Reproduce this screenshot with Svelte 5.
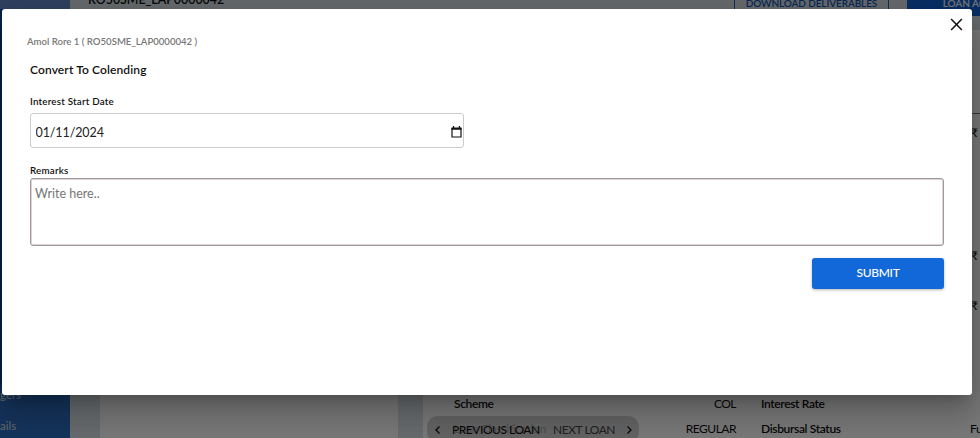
<script lang="ts">
	let startDate = $state('01/11/2024');
	let remarks = $state('');

	const customer = 'Amol Rore 1 ( RO50SME_LAP0000042 )';

	const amounts = ['first', 'second', 'third'];

	const details = [
		{ label: 'Scheme', value: 'COL', label2: 'Interest Rate', value2: '' },
		{ label: 'Loan Classification', value: 'REGULAR', label2: 'Disbursal Status', value2: 'Fully' }
	];
</script>

<div class="page">
	<nav class="sidebar">
		<div class="brand"></div>
		<span class="nav-item">gers</span>
		<span class="nav-item">ails</span>
	</nav>

	<main>
		<header>
			<span class="loan-id">RO50SME_LAP0000042</span>
			<button class="outlined">DOWNLOAD DELIVERABLES</button>
			<button class="filled">LOAN ACTIONS</button>
		</header>

		<div class="cards">
			<section class="card summary"></section>
			<section class="card loan">
				<div class="amounts">
					{#each amounts as amount (amount)}
						<span class="amount {amount}">₹</span>
					{/each}
				</div>
				{#each details as row (row.label)}
					<div class="row">
						<b>{row.label}</b>
						<span class="value">{row.value}</span>
						<b class="label2">{row.label2}</b>
						<span class="value2">{row.value2}</span>
					</div>
				{/each}
			</section>
		</div>
	</main>

	<div class="pager">
		<svg viewBox="0 0 8 10"><path d="M5.5 1.5 2 5l3.5 3.5" /></svg>
		<span class="prev">PREVIOUS LOAN</span>
		<span class="next">NEXT LOAN</span>
		<svg viewBox="0 0 8 10"><path d="M2.5 1.5 6 5 2.5 8.5" /></svg>
	</div>
</div>

<div class="backdrop">
	<div class="dialog" role="dialog" aria-modal="true">
		<button class="close" aria-label="Close">
			<svg viewBox="0 0 12 12"><path d="m1 1 10 10M11 1 1 11" /></svg>
		</button>
		<p class="customer">{customer}</p>
		<h2>Convert To Colending</h2>

		<label for="start-date">Interest Start Date</label>
		<div class="date-field">
			<input id="start-date" bind:value={startDate} />
			<svg viewBox="0 0 12 12">
				<path class="sheet" d="M1.5 2.5h9v8.5h-9z" />
				<path class="band" d="M1 1.4h10v2.4H1zM2.4 0h1.3v2H2.4zM8.3 0h1.3v2H8.3z" />
			</svg>
		</div>

		<label for="remarks" class="remarks-label">Remarks</label>
		<textarea id="remarks" placeholder="Write here.." bind:value={remarks}></textarea>

		<button class="submit">SUBMIT</button>
	</div>
</div>

<style>
	:global(body) {
		overflow: hidden;
		font-family: Lato, 'Noto Sans', sans-serif;
	}

	button {
		font-family: inherit;
		border: 0;
		cursor: pointer;
	}

	.page {
		position: relative;
		display: flex;
		height: 438px;
		overflow: hidden;
		color: #111;
		background: #dbe3ea;
	}

	.sidebar {
		box-sizing: border-box;
		flex: none;
		display: flex;
		flex-direction: column;
		width: 70px;
		color: #d5dbe5;
		background: linear-gradient(#0049a8 380px, #2e6fc2 395px);
	}

	.brand {
		flex: none;
		height: 9px;
		margin-bottom: 378px;
		background: #648dcd;
	}

	.nav-item {
		flex: none;
		height: 31px;
		font-size: 11.5px;
		line-height: 15px;
	}

	main {
		flex: 1;
		min-width: 0;
	}

	header {
		display: flex;
		align-items: flex-start;
		height: 30px;
		overflow: hidden;
	}

	.loan-id {
		flex: none;
		width: 646px;
		margin-left: 18px;
		margin-top: -8px;
		font-size: 12.4px;
		font-weight: 600;
		line-height: 15px;
	}

	header button {
		box-sizing: border-box;
		flex: none;
		height: 25px;
		margin-top: -9px;
		padding: 0;
		font-size: 10px;
		font-weight: 600;
		line-height: 23px;
		white-space: nowrap;
	}

	.outlined {
		width: 155px;
		letter-spacing: -0.1px;
		color: #1256b8;
		background: transparent;
		border: 1px solid #2462bb;
	}

	.filled {
		width: 144px;
		margin-left: 18px;
		color: #fff;
		background: #1565d8;
	}

	.cards {
		display: flex;
		gap: 25px;
		height: 408px;
		padding-left: 30px;
	}

	.card {
		box-sizing: border-box;
		flex: none;
		height: 420px;
		background: #fff;
	}

	.summary {
		width: 298px;
	}

	.loan {
		width: 600px;
		padding-left: 31px;
	}

	.amounts {
		display: flex;
		flex-direction: column;
		height: 366px;
		padding-left: 517px;
	}

	.amount {
		flex: none;
		font-size: 12px;
		line-height: 16px;
	}

	.first {
		box-sizing: border-box;
		height: 125px;
		margin-top: 83px;
		padding-top: 11px;
		border-top: 1px solid #777;
	}

	.second {
		height: 50px;
		margin-top: 10px;
	}

	.row {
		display: grid;
		grid-template-columns: 180px 102px 25px 209px 60px;
		height: 25px;
		font-size: 12px;
		letter-spacing: -0.35px;
		line-height: 16px;
	}

	.row b {
		font-weight: 600;
	}

	.value {
		text-align: right;
		letter-spacing: -0.5px;
	}

	.label2 {
		grid-column: 4;
	}

	.pager {
		position: absolute;
		top: 416px;
		left: 427px;
		box-sizing: border-box;
		display: flex;
		align-items: center;
		width: 212px;
		height: 27px;
		padding: 0 7px;
		font-size: 12px;
		letter-spacing: -0.45px;
		background: rgb(200 200 200 / 0.8);
		border-radius: 11px;
	}

	.pager svg {
		flex: none;
		width: 8px;
		height: 10px;
		fill: none;
		stroke: #111;
		stroke-width: 1.3;
	}

	.prev {
		flex: none;
		width: 101px;
		margin-left: 10px;
		white-space: nowrap;
	}

	.next {
		flex: none;
		width: 72px;
		color: #444;
		white-space: nowrap;
	}

	.backdrop {
		position: absolute;
		inset: 0;
		box-sizing: border-box;
		padding: 9px 8px 43px 2px;
		overflow: hidden;
		background: rgb(0 0 0 / 0.53);
	}

	.dialog {
		position: relative;
		box-sizing: border-box;
		display: flex;
		flex-direction: column;
		width: 970px;
		height: 386px;
		padding: 25px 28px 0;
		color: #111;
		background: #fff;
		border-radius: 3px;
		box-shadow:
			0 9px 12px -6px rgb(0 0 0 / 0.2),
			0 19px 30px 2px rgb(0 0 0 / 0.14),
			0 7px 37px 6px rgb(0 0 0 / 0.12);
	}

	.close {
		position: absolute;
		top: 9px;
		right: 9px;
		display: flex;
		padding: 0;
		background: none;
	}

	.close svg {
		width: 13px;
		height: 13px;
		stroke: #111;
		stroke-width: 1.4;
	}

	.customer {
		margin: 0 0 0 -3px;
		font-size: 9.6px;
		font-weight: 600;
		line-height: 15px;
		color: #777;
	}

	h2 {
		margin: 12px 0 0;
		font-size: 12px;
		font-weight: 600;
		letter-spacing: 0.12px;
		line-height: 18px;
	}

	label {
		margin-top: 15px;
		font-size: 9.8px;
		font-weight: 600;
		letter-spacing: 0.2px;
		line-height: 15px;
	}

	.date-field {
		box-sizing: border-box;
		display: flex;
		align-items: center;
		width: 434px;
		height: 35px;
		margin-top: 4px;
		padding: 3px 0 0 4.5px;
		border: 1px solid #ccc;
		border-radius: 3px;
	}

	.date-field input {
		flex: 1;
		padding: 0;
		font: 12.5px Lato, sans-serif;
		letter-spacing: -0.1px;
		color: #222;
		border: 0;
		outline: 0;
	}

	.date-field svg {
		width: 13px;
		height: 12px;
	}

	.sheet {
		fill: none;
		stroke: #111;
		stroke-width: 1.2;
	}

	.band {
		fill: #111;
	}

	.remarks-label {
		margin-top: 15px;
	}

	textarea {
		box-sizing: border-box;
		width: 914px;
		height: 68px;
		padding: 7px 4px;
		font: 12.5px/16px Lato, sans-serif;
		border: 1px solid #a09799;
		border-radius: 3px;
		outline: 0;
		box-shadow: inset 0 0 0 1px #dcd6d7;
		resize: none;
	}

	textarea::placeholder {
		color: #757575;
	}

	.submit {
		align-self: flex-end;
		width: 132px;
		height: 31px;
		margin-top: 12px;
		padding: 0 0 2px;
		font-size: 12px;
		font-weight: 500;
		letter-spacing: -0.3px;
		color: #fff;
		background: #1268d8;
		border-radius: 3px;
		box-shadow: 0 1px 3px rgb(0 0 0 / 0.3);
	}
</style>
